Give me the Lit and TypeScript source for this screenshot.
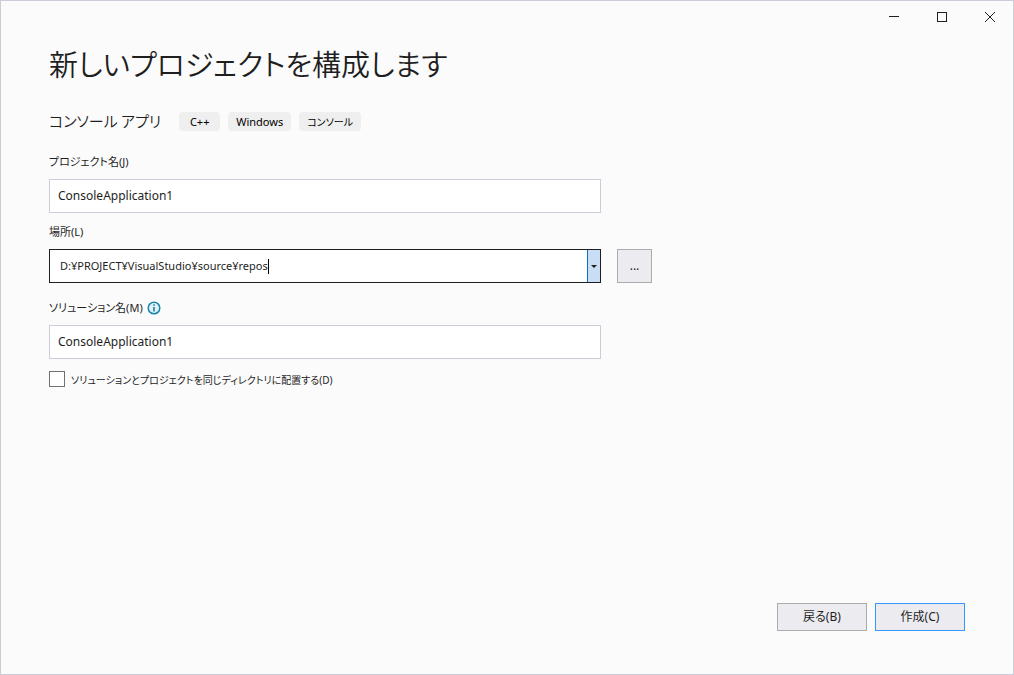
import { LitElement, html, css } from "lit";
import { customElement, state } from "lit/decorators.js";

@customElement("app-root")
export class AppRoot extends LitElement {
  static styles = css`
    :host {
      display: block;
      color: #1e1e1e;
      font-family: "Noto Sans", "Noto Sans CJK JP", sans-serif;
      font-size: 12px;
      line-height: 16px;
      font-feature-settings: "palt";
    }
    * {
      box-sizing: border-box;
    }
    button,
    input {
      font: inherit;
      color: inherit;
      font-feature-settings: inherit;
      margin: 0;
      padding: 0;
      border-radius: 0;
      outline: none;
    }
    .window {
      display: flex;
      flex-direction: column;
      min-height: 100vh;
      background: #fbfbfb;
      box-shadow: inset 0 0 0 1px #ccccdb;
    }
    .titlebar {
      display: flex;
      justify-content: flex-end;
      height: 34px;
    }
    .caption {
      display: grid;
      place-items: center;
      width: 48px;
      background: none;
      border: 0;
    }
    .content {
      flex: 1;
      padding: 5px 49px 0;
    }
    h1 {
      margin: 0;
      font-size: 29px;
      line-height: 48px;
      font-weight: 350;
      font-family: "Noto Sans CJK JP", sans-serif;
    }
    .template {
      display: flex;
      align-items: center;
      gap: 8px;
      margin: 22px 0 21px;
    }
    h2 {
      margin: 0 10px 0 0;
      font-size: 15px;
      line-height: 24px;
      font-weight: 350;
      font-family: "Noto Sans CJK JP", sans-serif;
    }
    .tag {
      min-width: 41px;
      padding: 2px 8px 1px;
      border-radius: 4px;
      background: #efefef;
      color: #000;
      font-size: 10px;
      text-align: center;
    }
    .tag:lang(en) {
      font-size: 11px;
    }
    .field {
      display: grid;
      grid-template-columns: minmax(0, 552px) 35px;
      column-gap: 16px;
      row-gap: 9px;
      margin-bottom: 12px;
    }
    .field.name {
      margin-bottom: 11px;
    }
    .field.place {
      margin-bottom: 17px;
    }
    .label {
      grid-column: 1 / -1;
      display: flex;
      align-items: center;
      gap: 4px;
      height: 16px;
      font-size: 11px;
    }
    .text {
      width: 100%;
      height: 34px;
      padding: 0 8px 2px;
      border: 1px solid #ccccdb;
      background: #fff;
    }
    .combo {
      display: flex;
      align-items: center;
      height: 34px;
      padding-left: 10px;
      border: 1px solid #1e1e1e;
      background: #fff;
    }
    .path {
      field-sizing: content;
      height: 32px;
      padding-bottom: 2px;
      border: 0;
      background: none;
      font-size: 11px;
      caret-color: transparent;
    }
    .caret {
      width: 1px;
      height: 15px;
      background: #000;
    }
    .drop {
      display: grid;
      place-items: center;
      width: 13px;
      height: 32px;
      margin-left: auto;
      border: 0;
      border-left: 1px solid #0e70c0;
      background: #c9def5;
    }
    .push {
      height: 28px;
      border: 1px solid #acacac;
      background: #ececf0;
    }
    .browse {
      height: 34px;
    }
    .check {
      display: flex;
      align-items: center;
      gap: 6px;
      width: fit-content;
      font-size: 10px;
    }
    .check span {
      line-height: 14px;
      padding-top: 2px;
    }
    .check input {
      appearance: none;
      width: 16px;
      height: 16px;
      border: 1px solid #717171;
      background: #fefefe;
    }
    .check input:checked {
      background: #717171;
    }
    .footer {
      display: flex;
      justify-content: flex-end;
      gap: 8px;
      padding: 0 49px 44px;
    }
    .footer .push {
      width: 90px;
    }
    .footer .primary {
      border-color: #3399ff;
    }
    svg {
      display: block;
    }
  `;

  @state() private name = "ConsoleApplication1";
  @state() private location = "D:¥PROJECT¥VisualStudio¥source¥repos";

  private rename(e: Event) {
    this.name = (e.target as HTMLInputElement).value;
  }

  render() {
    return html`
      <div class="window">
        <div class="titlebar">
          <button class="caption" aria-label="最小化">
            <svg width="10" height="10"><path d="M0 4.5H10" stroke="#1e1e1e" /></svg>
          </button>
          <button class="caption" aria-label="最大化">
            <svg width="10" height="10"><rect x=".5" y=".5" width="9" height="9" fill="none" stroke="#1e1e1e" /></svg>
          </button>
          <button class="caption" aria-label="閉じる">
            <svg width="10" height="10"><path d="M0 0L10 10M10 0L0 10" stroke="#1e1e1e" /></svg>
          </button>
        </div>

        <main class="content">
          <h1>新しいプロジェクトを構成します</h1>
          <div class="template">
            <h2>コンソール アプリ</h2>
            <span class="tag" lang="en">C++</span>
            <span class="tag" lang="en">Windows</span>
            <span class="tag" lang="ja">コンソール</span>
          </div>

          <div class="field name">
            <label class="label" for="name">プロジェクト名(J)</label>
            <input class="text" id="name" type="text" .value=${this.name} @input=${this.rename} />
          </div>

          <div class="field place">
            <label class="label" for="location">場所(L)</label>
            <div class="combo">
              <input class="path" id="location" type="text" .value=${this.location} />
              <span class="caret"></span>
              <button class="drop" aria-label="場所の一覧">
                <svg width="6" height="3"><path d="M0 0H6L3 3Z" fill="#1e1e1e" /></svg>
              </button>
            </div>
            <button class="push browse" aria-label="参照">...</button>
          </div>

          <div class="field">
            <label class="label" for="solution">
              ソリューション名(M)
              <svg width="14" height="14" viewBox="0 0 14 14">
                <circle cx="7" cy="7" r="5.8" fill="#e3f1f6" stroke="#1a86ab" stroke-width="1.5" />
                <path d="M7 3.2V4.8M7 6V10.6" stroke="#1a86ab" stroke-width="1.6" />
              </svg>
            </label>
            <input class="text" id="solution" type="text" .value=${this.name} />
          </div>

          <label class="check">
            <input type="checkbox" />
            <span>ソリューションとプロジェクトを同じディレクトリに配置する(D)</span>
          </label>
        </main>

        <footer class="footer">
          <button class="push">戻る(B)</button>
          <button class="push primary">作成(C)</button>
        </footer>
      </div>
    `;
  }
}
